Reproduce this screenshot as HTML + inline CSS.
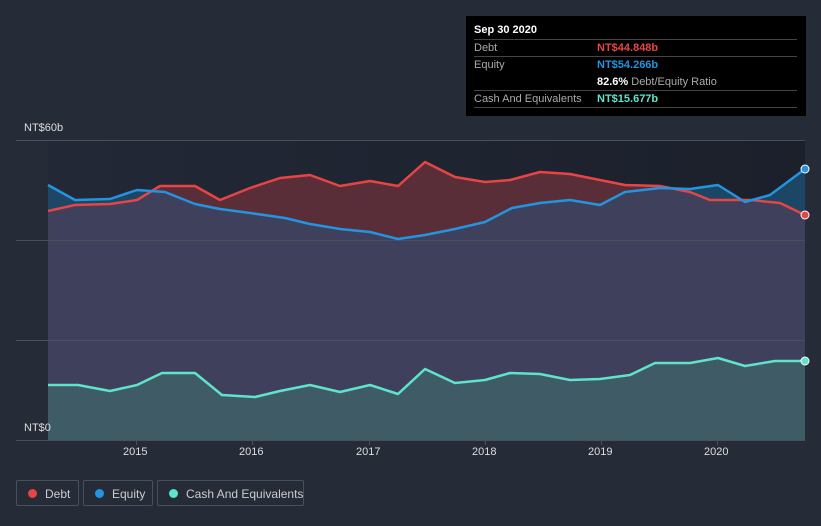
<!DOCTYPE html>
<html><head><style>
body{margin:0;width:821px;height:526px;background:#262b38;font-family:"Liberation Sans",sans-serif;overflow:hidden;position:relative}
.tip{position:absolute;left:466px;top:16px;width:340px;height:100px;background:#000;color:#fff;font-size:11px}
.tip .h{position:absolute;left:8px;top:8px;font-weight:bold}
.row{position:absolute;left:8px;width:323px;border-top:1px solid #444;height:17px;line-height:17px}
.row .l{color:#aaa;position:absolute;left:0}
.row .v{position:absolute;left:123px;font-weight:bold;white-space:nowrap}
.leg{position:absolute;top:480px;height:26px;border:1px solid #4a4f5c;border-radius:2px;color:#ccc;font-size:12px;line-height:26px;box-sizing:border-box;white-space:nowrap}
.leg i{position:absolute;top:8px;left:11px;width:9px;height:9px;border-radius:50%}
.leg span{position:absolute;left:28px}
.ax{position:absolute;color:#ddd;font-size:11px}
</style></head><body>
<svg width="821" height="526" style="position:absolute;left:0;top:0">
<defs>
<linearGradient id="bg" x1="0" y1="0" x2="1" y2="0"><stop offset="0" stop-color="#222836"/><stop offset="1" stop-color="#1b202b"/></linearGradient>
</defs>
<rect x="48" y="140" width="757" height="300" fill="url(#bg)"/>
<polygon fill="#5a2e38" points="48,211 75,205 110,204 137,200 160,186 195,186 220,200 250,188 280,178 310,175 340,186 370,181 398,186 425,162 455,177 485,182 510,180 540,172 570,174 600,180 625,185 660,186 690,192 710,200 750,200 780,203 805,215 805,440 48,440"/>
<polygon fill="#1d4a6a" opacity="0.9" points="48,185 75,200 110,199 137,190 165,192 195,204 220,209 250,213 285,218 310,224 340,229 370,232 398,239 425,235 455,229 485,222 512,208 540,203 570,200 600,205 625,192 660,188 690,189 718,185 745,202 770,195 805,169 805,440 48,440"/>
<polygon fill="#433f5a" opacity="0.85" points="48,211 75,205 110,204 137,200 150,192 165,192 195,204 220,209 250,213 285,218 310,224 340,229 370,232 398,239 425,235 455,229 485,222 512,208 540,203 570,200 600,205 625,192 660,188 690,192 710,200 730,200 745,202 770,203 780,203 805,215 805,440 48,440"/>
<polygon fill="#3f5b66" points="48,385 78,385 110,391 137,385 162,373 195,373 222,395 255,397 280,391 310,385 340,392 370,385 398,394 425,369 455,383 485,380 510,373 540,374 570,380 600,379 630,375 655,363 690,363 718,358 745,366 775,361 805,361 805,440 48,440"/>
<g stroke="#4a4f5c" stroke-width="1"><line x1="16" y1="140.5" x2="805" y2="140.5"/><line x1="16" y1="240.5" x2="805" y2="240.5"/><line x1="16" y1="340.5" x2="805" y2="340.5"/><line x1="16" y1="440.5" x2="805" y2="440.5"/></g>
<g fill="none" stroke-width="2.5" stroke-linejoin="round">
<polyline stroke="#e64545" points="48,211 75,205 110,204 137,200 160,186 195,186 220,200 250,188 280,178 310,175 340,186 370,181 398,186 425,162 455,177 485,182 510,180 540,172 570,174 600,180 625,185 660,186 690,192 710,200 750,200 780,203 805,215"/>
<polyline stroke="#2394df" points="48,185 75,200 110,199 137,190 165,192 195,204 220,209 250,213 285,218 310,224 340,229 370,232 398,239 425,235 455,229 485,222 512,208 540,203 570,200 600,205 625,192 660,188 690,189 718,185 745,202 770,195 805,169"/>
<polyline stroke="#5fe3cc" points="48,385 78,385 110,391 137,385 162,373 195,373 222,395 255,397 280,391 310,385 340,392 370,385 398,394 425,369 455,383 485,380 510,373 540,374 570,380 600,379 630,375 655,363 690,363 718,358 745,366 775,361 805,361"/>
</g>
<circle cx="805" cy="215" r="4" fill="#e64545" stroke="#fff" stroke-width="1"/>
<circle cx="805" cy="169" r="4" fill="#2394df" stroke="#fff" stroke-width="1"/>
<circle cx="805" cy="361" r="4" fill="#5fe3cc" stroke="#fff" stroke-width="1"/>
<g stroke="#4a4f5c"><line x1="136.5" y1="440" x2="136.5" y2="445"/><line x1="252.5" y1="440" x2="252.5" y2="445"/><line x1="369.5" y1="440" x2="369.5" y2="445"/><line x1="485.5" y1="440" x2="485.5" y2="445"/><line x1="601.5" y1="440" x2="601.5" y2="445"/><line x1="717.5" y1="440" x2="717.5" y2="445"/></g>
</svg>
<div class="ax" style="left:24px;top:122px">NT$60b</div>
<div class="ax" style="left:24px;top:422px">NT$0</div>
<div class="ax" style="left:123px;top:446px">2015</div>
<div class="ax" style="left:239px;top:446px">2016</div>
<div class="ax" style="left:356px;top:446px">2017</div>
<div class="ax" style="left:472px;top:446px">2018</div>
<div class="ax" style="left:588px;top:446px">2019</div>
<div class="ax" style="left:704px;top:446px">2020</div>
<div class="tip">
<div class="h">Sep 30 2020</div>
<div class="row" style="top:23px"><span class="l">Debt</span><span class="v" style="color:#e64545">NT$44.848b</span></div>
<div class="row" style="top:40px;height:34px"><span class="l">Equity</span><span class="v" style="color:#2394df">NT$54.266b</span><span class="v" style="top:17px;color:#fff">82.6% <b style="color:#aaa;font-weight:normal">Debt/Equity Ratio</b></span></div>
<div class="row" style="top:74px"><span class="l">Cash And Equivalents</span><span class="v" style="color:#5fe3cc">NT$15.677b</span></div>
<div class="row" style="top:91px;height:0"></div>
</div>
<div class="leg" style="left:16px;width:63px"><i style="background:#e64545"></i><span>Debt</span></div>
<div class="leg" style="left:83px;width:70px"><i style="background:#2394df"></i><span>Equity</span></div>
<div class="leg" style="left:157px;width:147px"><i style="background:#5fe3cc"></i><span>Cash And Equivalents</span></div>
</body></html>
